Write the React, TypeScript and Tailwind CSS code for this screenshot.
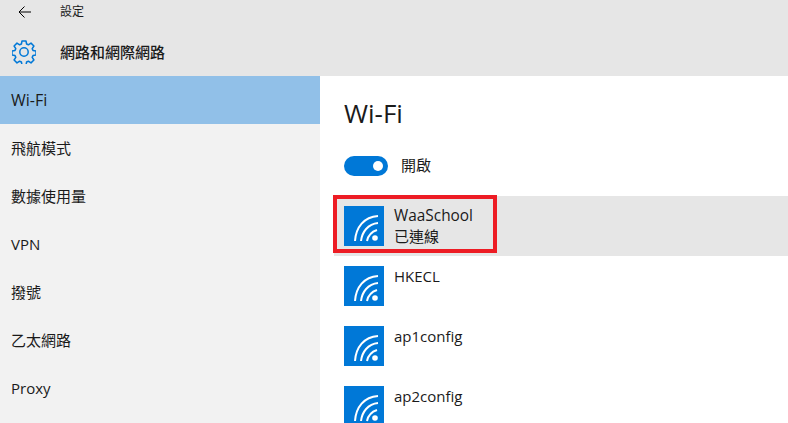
import React from "react";

const font = { fontFamily: '"Open Sans", "Noto Sans CJK TC", sans-serif' };

function WifiIcon() {
  return (
    <div className="w-10 h-10 bg-[#0078d7] shrink-0">
      <svg width="40" height="40" viewBox="0 0 40 40" fill="none" stroke="#fff" strokeWidth="2">
        <path d="M11 35 C12 21 20 11 34 10" />
        <path d="M17 35 C18 26 24 18 34 17" />
        <path d="M23 35 C24 30 27 26 33 24" />
        <circle cx="31" cy="32" r="2.8" fill="#fff" stroke="none" />
      </svg>
    </div>
  );
}

function Gear() {
  return (
    <svg width="24" height="24" viewBox="0 0 24 24" fill="none" stroke="#0078d7" strokeWidth="1.5" strokeLinejoin="round">
      <path d="M10 1h4l.6 3 1.8.8 2.6-1.7 2.9 2.9-1.7 2.6.8 1.8 3 .6v4l-3 .6-.8 1.8 1.7 2.6-2.9 2.9-2.6-1.7-1.8.8-.6 3h-4l-.6-3-1.8-.8-2.6 1.7-2.9-2.9 1.7-2.6-.8-1.8-3-.6v-4l3-.6.8-1.8-1.7-2.6 2.9-2.9 2.6 1.7 1.8-.8z" />
      <circle cx="12" cy="12" r="4.2" />
    </svg>
  );
}

const side = ["飛航模式", "數據使用量", "VPN", "撥號", "乙太網路", "Proxy"];
const nets = ["HKECL", "ap1config", "ap2config"];

export default function App() {
  return (
    <div className="w-[788px] h-[423px] overflow-hidden flex flex-col bg-white text-[#1a1a1a]" style={font}>
      <header className="h-[76px] shrink-0 bg-[#e6e6e6] flex flex-col">
        <div className="h-6 flex items-center">
          <svg className="ml-[18px]" width="13" height="12" viewBox="0 0 13 12" fill="none" stroke="#000" strokeWidth="1">
            <path d="M13 6H1M6.5 .5L1 6l5.5 5.5" />
          </svg>
          <span className="ml-[29px] text-[12px] leading-none">設定</span>
        </div>
        <div className="h-[52px] flex items-center pl-3 pt-[4px]">
          <Gear />
          <span className="ml-6 text-[15px] font-medium leading-none">網路和網際網路</span>
        </div>
      </header>
      <div className="flex-1 flex min-h-0">
        <nav className="w-80 shrink-0 bg-[#f2f2f2] text-[15px]">
          <div className="h-12 pl-[11px] flex items-center bg-[#91c0e8] text-[16px]">Wi-Fi</div>
          {side.map((s) => (
            <div key={s} className="h-12 pl-[11px] flex items-center">{s}</div>
          ))}
        </nav>
        <main className="flex-1 min-w-0 overflow-hidden">
          <h1 className="pl-6 pt-[18px] h-[72px] text-[26px] leading-[38px]">Wi-Fi</h1>
          <div className="pl-6 flex items-center h-5 mt-[8px] text-[15px]">
            <div className="w-11 h-5 rounded-full bg-[#0078d7] flex items-center justify-end pr-[5px]">
              <div className="w-[10px] h-[10px] rounded-full bg-white" />
            </div>
            <span className="ml-[13px] -mt-[2px]">開啟</span>
          </div>
          <div className="relative mt-[20px] ml-[14px] h-[60px] bg-[#e6e6e6] flex pl-[10px] pt-[10px] text-[15px] leading-5">
            <WifiIcon />
            <div className="ml-[10px] text-[15.4px]">
              <div>WaaSchool</div>
              <div className="text-[15px]">已連線</div>
            </div>
            <div className="absolute -left-[1px] -top-[1px] w-[164px] h-[58px] border-4 border-[#ed1c24]" />
          </div>
          {nets.map((n) => (
            <div key={n} className="ml-[14px] h-[60px] flex pl-[10px] pt-[10px] text-[15px] leading-5">
              <WifiIcon />
              <div className="ml-[10px]">{n}</div>
            </div>
          ))}
        </main>
      </div>
    </div>
  );
}
